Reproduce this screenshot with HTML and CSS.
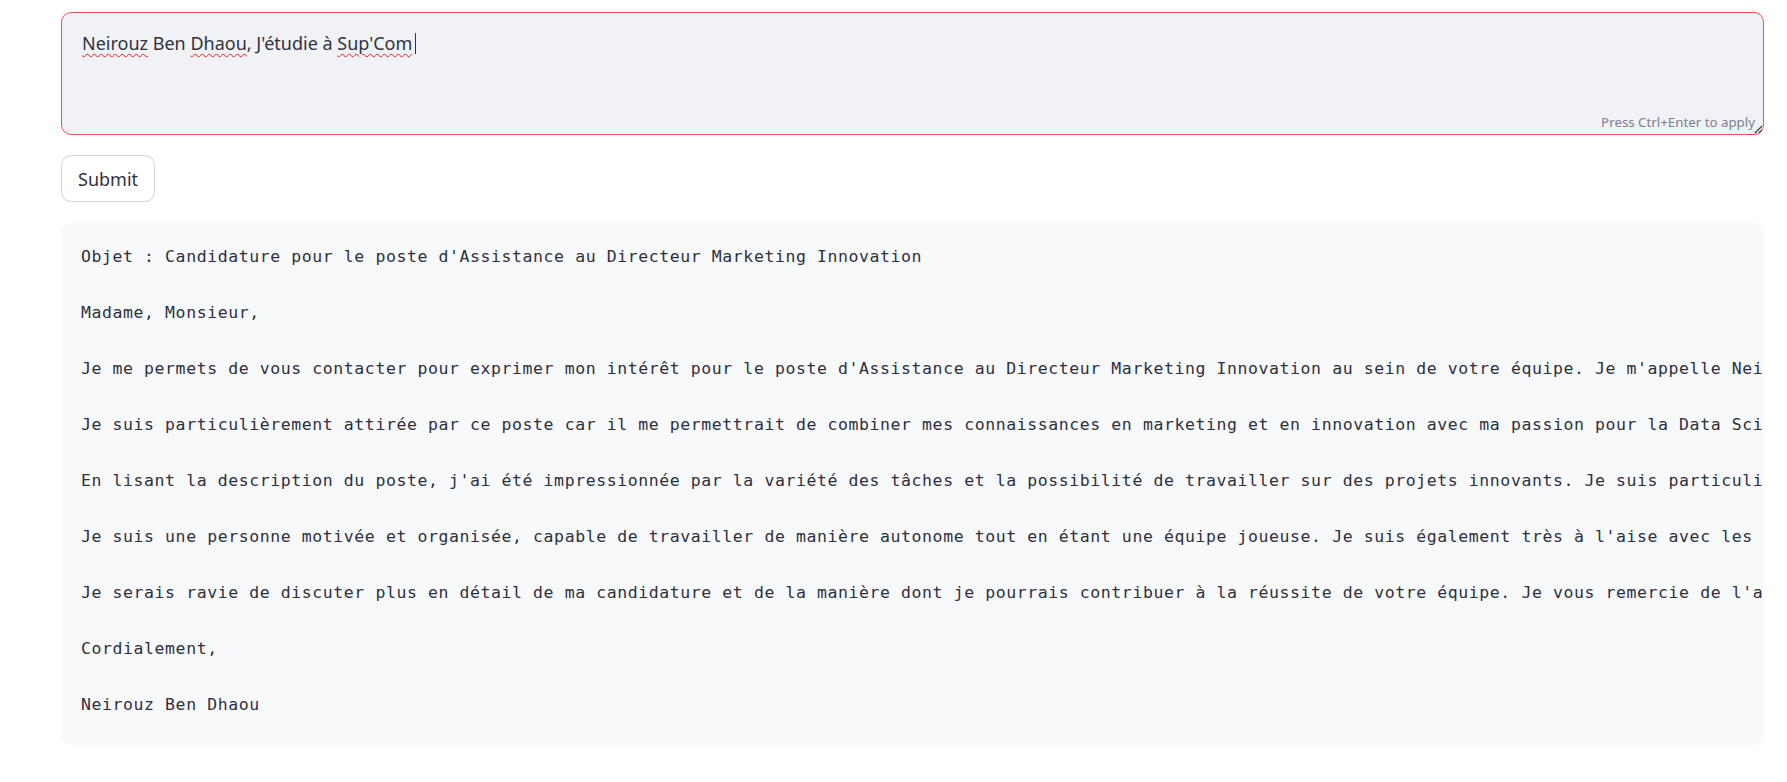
FILE: index.html
```html
<!DOCTYPE html>
<html lang="fr">
<head>
<meta charset="utf-8">
<title>Lettre</title>
<link rel="stylesheet" href="styles.css">
</head>
<body>
<main class="app">
  <div class="field">
    <div class="textarea"><span class="misspelled">Neirouz</span> Ben <span class="misspelled">Dhaou</span>, J'étudie à <span class="misspelled">Sup'Com</span><span class="caret"></span></div>
    <div class="hint">Press Ctrl+Enter to apply</div>
    <svg class="grip" width="10" height="10" viewBox="0 0 10 10"><path d="M9 2 L2 9 M9 6 L6 9" stroke="#444" stroke-width="1.3" fill="none"/></svg>
  </div>
  <div class="actions">
    <button class="btn">Submit</button>
  </div>
  <div class="code"><pre>Objet : Candidature pour le poste d'Assistance au Directeur Marketing Innovation

Madame, Monsieur,

Je me permets de vous contacter pour exprimer mon intérêt pour le poste d'Assistance au Directeur Marketing Innovation au sein de votre équipe. Je m'appelle Neirouz Ben Dhaou et j'étudie à Sup'Com.

Je suis particulièrement attirée par ce poste car il me permettrait de combiner mes connaissances en marketing et en innovation avec ma passion pour la Data Science.

En lisant la description du poste, j'ai été impressionnée par la variété des tâches et la possibilité de travailler sur des projets innovants. Je suis particulièrement intéressée par la veille.

Je suis une personne motivée et organisée, capable de travailler de manière autonome tout en étant une équipe joueuse. Je suis également très à l'aise avec les outils numériques.

Je serais ravie de discuter plus en détail de ma candidature et de la manière dont je pourrais contribuer à la réussite de votre équipe. Je vous remercie de l'attention portée à ma candidature.

Cordialement,

Neirouz Ben Dhaou</pre></div>
</main>
</body>
</html>
```
FILE: styles.css
```css
html, body {
  margin: 0;
  padding: 0;
  background: #ffffff;
}
body {
  font-family: "Noto Sans", "Open Sans", sans-serif;
  color: #31333f;
}
.app {
  padding: 12px 23px 0 61px;
  display: flex;
  flex-direction: column;
}
.field {
  position: relative;
}
.textarea {
  box-sizing: border-box;
  height: 123px;
  background: #f0f2f6;
  border: 1px solid #ff4b4b;
  border-radius: 10px;
  padding: 17px 20px;
  font-size: 18px;
  letter-spacing: 0;
  line-height: 26px;
  color: #31333f;
}
.misspelled {
  text-decoration: underline wavy #ee1c1c;
  text-decoration-thickness: 1.4px;
  text-underline-offset: 3px;
}
.caret {
  display: inline-block;
  width: 1px;
  height: 21px;
  background: #31333f;
  vertical-align: -4px;
  margin-left: 3px;
}
.hint {
  position: absolute;
  right: 9px;
  bottom: 4px;
  font-size: 13.3px;
  color: #7c8091;
}
.grip {
  position: absolute;
  right: 1px;
  bottom: 1px;
}
.actions {
  margin-top: 20px;
  display: flex;
}
.btn {
  box-sizing: border-box;
  height: 47px;
  padding: 0 16px;
  background: #ffffff;
  border: 1px solid rgba(49, 51, 63, 0.2);
  border-radius: 10px;
  font-family: "Noto Sans", "Open Sans", sans-serif;
  font-size: 18px;
  color: #31333f;
}
.code {
  margin-top: 21px;
  background: #f8f9fb;
  border-radius: 10px;
  overflow: hidden;
  height: 522px;
  box-sizing: border-box;
  padding: 20px 0 26px 20px;
}
.code pre {
  margin: 0;
  font-family: "DejaVu Sans Mono", "Liberation Mono", monospace;
  font-size: 16.5px;
  letter-spacing: 0.58px;
  line-height: 28px;
  color: #2e303b;
  white-space: pre;
  overflow: hidden;
}
```
